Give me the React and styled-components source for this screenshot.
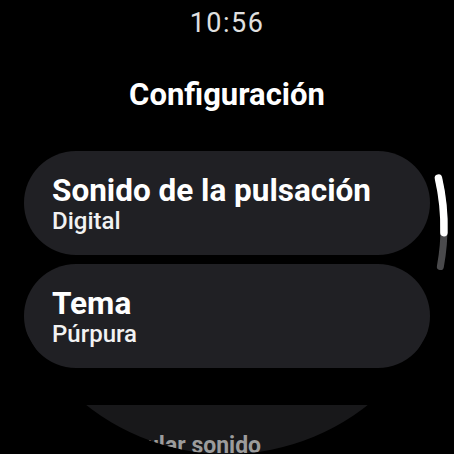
import React from "react";
import styled, { createGlobalStyle } from "styled-components";

const Global = createGlobalStyle`
  html, body { margin: 0; padding: 0; background: #000; }
  body { font-family: Roboto, "Noto Sans", sans-serif; }
`;

const Screen = styled.div`
  position: relative;
  width: 454px;
  height: 454px;
  border-radius: 50%;
  overflow: hidden;
  background: #000;
  display: flex;
  flex-direction: column;
  align-items: center;
`;

const Time = styled.div`
  margin-top: 8px;
  font-size: 27px;
  line-height: 30px;
  letter-spacing: 1.5px;
  color: #e0e0e0;
  font-weight: 400;
`;

const Title = styled.h1`
  margin: 40px 0 0;
  font-size: 31px;
  line-height: 34px;
  font-weight: 700;
  color: #fff;
`;

const List = styled.div`
  margin-top: 39px;
  width: 406px;
  display: flex;
  flex-direction: column;
  gap: 9px;
`;

const Chip = styled.div`
  height: 104px;
  border-radius: 52px;
  background: ${(p) => (p.$dim ? "#18181a" : "#202024")};
  padding: ${(p) => (p.$dim ? "26px 0 0 94px" : "0 28px")};
  box-sizing: border-box;
  display: flex;
  flex-direction: column;
  justify-content: ${(p) => (p.$dim ? "flex-start" : "center")};
  margin-top: ${(p) => (p.$dim ? "28px" : "0")};
`;

const ChipLabel = styled.div`
  font-size: ${(p) => (p.$dim ? "23px" : "31.5px")};
  line-height: ${(p) => (p.$dim ? "30px" : "35px")};
  font-weight: 700;
  color: ${(p) => (p.$dim ? "#9c9c9c" : "#fff")};
  white-space: nowrap;
`;

const ChipValue = styled.div`
  font-size: 24px;
  line-height: 26px;
  font-weight: 500;
  color: #f2f2f2;
`;

const ScrollArc = styled.svg`
  position: absolute;
  left: 0;
  top: 0;
  width: 454px;
  height: 454px;
  pointer-events: none;
`;

function arcPath(r, a0, a1) {
  const cx = 227, cy = 227;
  const p = (a) => [cx + r * Math.cos((a * Math.PI) / 180), cy + r * Math.sin((a * Math.PI) / 180)];
  const [x0, y0] = p(a0);
  const [x1, y1] = p(a1);
  return `M ${x0} ${y0} A ${r} ${r} 0 0 1 ${x1} ${y1}`;
}

export default function App() {
  return (
    <>
      <Global />
      <Screen>
        <Time>10:56</Time>
        <Title>Configuración</Title>
        <List>
          <Chip>
            <ChipLabel>Sonido de la pulsación</ChipLabel>
            <ChipValue>Digital</ChipValue>
          </Chip>
          <Chip>
            <ChipLabel>Tema</ChipLabel>
            <ChipValue>Púrpura</ChipValue>
          </Chip>
          <Chip $dim>
            <ChipLabel $dim>Anular sonido</ChipLabel>
          </Chip>
        </List>
        <ScrollArc viewBox="0 0 454 454">
          <path d={arcPath(217, -12.5, 10.5)} stroke="#4a4a4c" strokeWidth="7" strokeLinecap="round" fill="none" />
          <path d={arcPath(217, -13, 1.5)} stroke="#ffffff" strokeWidth="7.5" strokeLinecap="round" fill="none" />
        </ScrollArc>
      </Screen>
    </>
  );
}
